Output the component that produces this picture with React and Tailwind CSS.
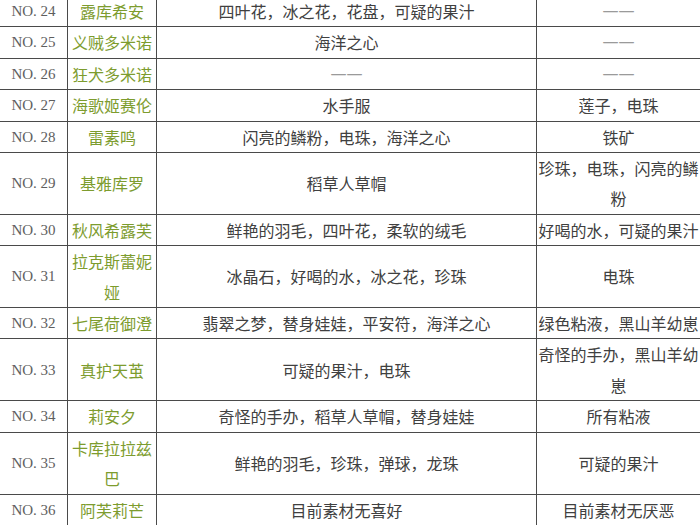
import React from "react";

const rows = [
  ["24", "露库希安", "四叶花，冰之花，花盘，可疑的果汁", "一一"],
  ["25", "义贼多米诺", "海洋之心", "一一"],
  ["26", "狂犬多米诺", "一一", "一一"],
  ["27", "海歌姬赛伦", "水手服", "莲子，电珠"],
  ["28", "雷素鸣", "闪亮的鳞粉，电珠，海洋之心", "铁矿"],
  ["29", "基雅库罗", "稻草人草帽", "珍珠，电珠，闪亮的鳞粉"],
  ["30", "秋风希露芙", "鲜艳的羽毛，四叶花，柔软的绒毛", "好喝的水，可疑的果汁"],
  ["31", "拉克斯蕾妮娅", "冰晶石，好喝的水，冰之花，珍珠", "电珠"],
  ["32", "七尾荷御澄", "翡翠之梦，替身娃娃，平安符，海洋之心", "绿色粘液，黑山羊幼崽"],
  ["33", "真护天茧", "可疑的果汁，电珠", "奇怪的手办，黑山羊幼崽"],
  ["34", "莉安夕", "奇怪的手办，稻草人草帽，替身娃娃", "所有粘液"],
  ["35", "卡库拉拉兹巴", "鲜艳的羽毛，珍珠，弹球，龙珠", "可疑的果汁"],
  ["36", "阿芙莉芒", "目前素材无喜好", "目前素材无厌恶"],
];

const cjk = { fontFamily: '"Noto Sans CJK SC", "Noto Sans", sans-serif' };
const serif = { fontFamily: '"Liberation Serif", "Noto Sans CJK SC", serif' };

function Cell({ r }) {
  const dash = r === "一一";
  return <span className={dash ? "text-[#9a9a9a]" : ""}>{r}</span>;
}

export default function App() {
  return (
    <div className="w-[700px] h-[525px] overflow-hidden bg-white">
      <table
        className="table-fixed border-collapse w-[706px] -ml-[1px] -mt-[5px] text-[16px] leading-[30.4px] text-[#404040]"
        style={cjk}
      >
        <colgroup>
          <col className="w-[68px]" />
          <col className="w-[89px]" />
          <col className="w-[380px]" />
          <col className="w-[169px]" />
        </colgroup>
        <tbody>
          {rows.map((r) => (
            <tr key={r[0]}>
              <td
                className="border border-[#4a4a4a] p-0 text-center align-middle text-[15px] text-[#5e5e5e]"
                style={serif}
              >
                {"NO. " + r[0]}
              </td>
              <td className="border border-[#4a4a4a] px-[1px] py-0 text-center align-middle text-[#7d9c2e]">
                {r[1]}
              </td>
              <td className="border border-[#4a4a4a] px-[1px] py-0 text-center align-middle">
                <Cell r={r[2]} />
              </td>
              <td className="border border-[#4a4a4a] pl-[1px] pr-[6px] py-0 text-center align-middle">
                <Cell r={r[3]} />
              </td>
            </tr>
          ))}
        </tbody>
      </table>
    </div>
  );
}
